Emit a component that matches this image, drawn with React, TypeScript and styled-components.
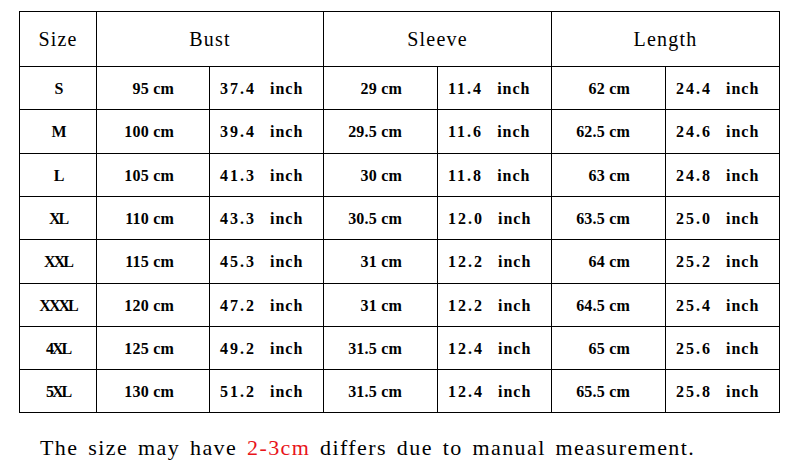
import styled, { createGlobalStyle } from "styled-components";

const GlobalStyle = createGlobalStyle`
  html, body {
    margin: 0;
    padding: 0;
    background: #ffffff;
  }
  body {
    font-family: "Liberation Serif", "DejaVu Serif", serif;
    color: #000000;
  }
`;

const Page = styled.div`
  width: 788px;
  height: 466px;
  padding: 11px 0 0 19px;
  box-sizing: border-box;
  display: flex;
  flex-direction: column;
`;

const Grid = styled.div`
  width: 761px;
  display: grid;
  grid-template-columns: 76px 112px repeat(5, 113px);
  grid-template-rows: 54px 42px 43px 42px 42px 43px 42px 42px 42px;
  gap: 1px;
  padding: 1px;
  box-sizing: border-box;
  background: #000000;
`;

const Cell = styled.div<{ $span?: number; $align?: "center" | "left" | "right" }>`
  background: #ffffff;
  grid-column: span ${(p) => p.$span ?? 1};
  display: flex;
  align-items: center;
  justify-content: ${(p) =>
    p.$align === "left" ? "flex-start" : p.$align === "right" ? "flex-end" : "center"};
  padding: ${(p) =>
    p.$align === "left" ? "0 0 0 10px" : p.$align === "right" ? "0 35px 0 0" : "0"};
  white-space: pre;
`;

const HeadText = styled.span`
  font-size: 20px;
  letter-spacing: 1.2px;
  padding-top: 1px;
`;

const SizeText = styled.span`
  font-size: 16px;
  font-weight: bold;
  letter-spacing: -2px;
  padding-top: 1px;
`;

const BodyText = styled.span`
  font-size: 16px;
  font-weight: bold;
  letter-spacing: 0.2px;
  padding-top: 1px;
`;

const Inch = styled.span`
  display: flex;
  align-items: baseline;
  gap: 14px;
  font-size: 16px;
  font-weight: bold;
  padding-top: 1px;
`;

const Num = styled.span`
  letter-spacing: 2px;
`;

const Unit = styled.span`
  letter-spacing: 1px;
`;

const Note = styled.p`
  margin: 23px 0 0 21px;
  font-size: 22px;
  line-height: 24px;
  letter-spacing: 1.4px;
  word-spacing: 3px;
  white-space: pre;
`;

const Red = styled.span`
  color: #e8141a;
`;

type Row = {
  size: string;
  bust: [string, string];
  sleeve: [string, string];
  length: [string, string];
};

const rows: Row[] = [
  { size: "S", bust: ["95", "37.4"], sleeve: ["29", "11.4"], length: ["62", "24.4"] },
  { size: "M", bust: ["100", "39.4"], sleeve: ["29.5", "11.6"], length: ["62.5", "24.6"] },
  { size: "L", bust: ["105", "41.3"], sleeve: ["30", "11.8"], length: ["63", "24.8"] },
  { size: "XL", bust: ["110", "43.3"], sleeve: ["30.5", "12.0"], length: ["63.5", "25.0"] },
  { size: "XXL", bust: ["115", "45.3"], sleeve: ["31", "12.2"], length: ["64", "25.2"] },
  { size: "XXXL", bust: ["120", "47.2"], sleeve: ["31", "12.2"], length: ["64.5", "25.4"] },
  { size: "4XL", bust: ["125", "49.2"], sleeve: ["31.5", "12.4"], length: ["65", "25.6"] },
  { size: "5XL", bust: ["130", "51.2"], sleeve: ["31.5", "12.4"], length: ["65.5", "25.8"] },
];

function Pair({ values }: { values: [string, string] }) {
  return (
    <>
      <Cell $align="right">
        <BodyText>{values[0]} cm</BodyText>
      </Cell>
      <Cell $align="left">
        <Inch>
          <Num>{values[1]}</Num>
          <Unit>inch</Unit>
        </Inch>
      </Cell>
    </>
  );
}

export default function App() {
  return (
    <>
      <GlobalStyle />
      <Page>
        <Grid>
          <Cell>
            <HeadText>Size</HeadText>
          </Cell>
          <Cell $span={2}>
            <HeadText>Bust</HeadText>
          </Cell>
          <Cell $span={2}>
            <HeadText>Sleeve</HeadText>
          </Cell>
          <Cell $span={2}>
            <HeadText>Length</HeadText>
          </Cell>
          {rows.map((r) => (
            <>
              <Cell key={r.size}>
                <SizeText>{r.size}</SizeText>
              </Cell>
              <Pair values={r.bust} />
              <Pair values={r.sleeve} />
              <Pair values={r.length} />
            </>
          ))}
        </Grid>
        <Note>
          The size may have <Red>2-3cm</Red> differs due to manual measurement.
        </Note>
      </Page>
    </>
  );
}
